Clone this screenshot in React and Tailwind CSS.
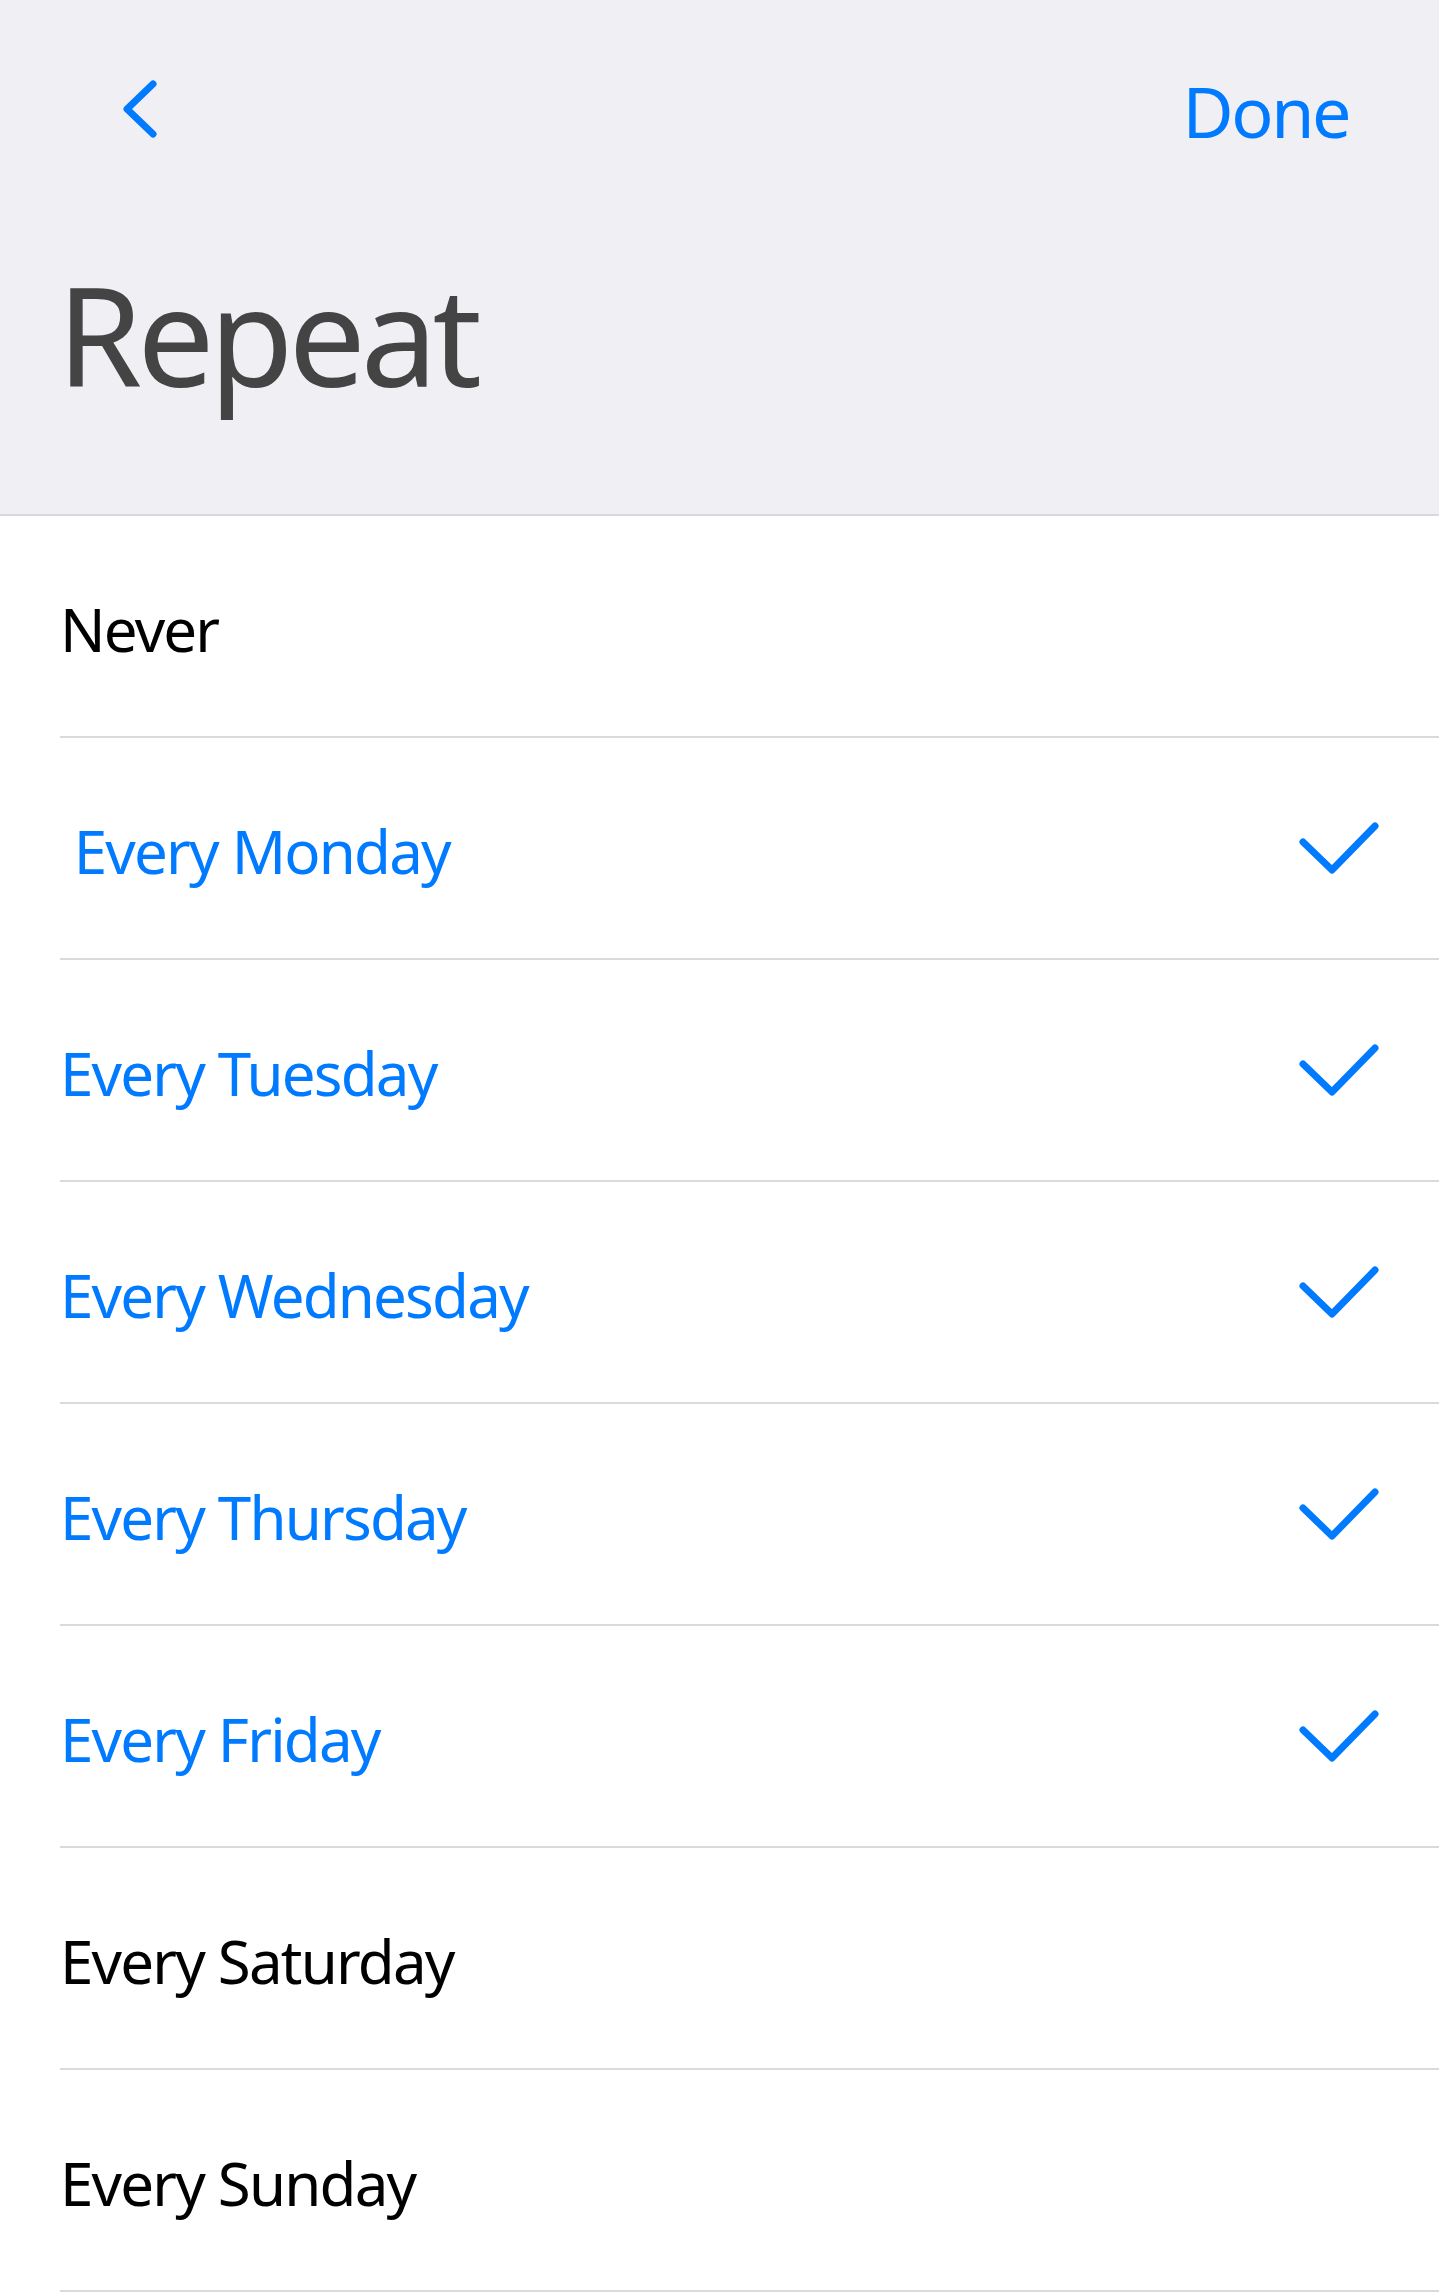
import React from 'react';

const BLUE = '#007aff';

const days = [
  { label: 'Never', on: false },
  { label: '\u00a0Every Monday', on: true },
  { label: 'Every Tuesday', on: true },
  { label: 'Every Wednesday', on: true },
  { label: 'Every Thursday', on: true },
  { label: 'Every Friday', on: true },
  { label: 'Every Saturday', on: false },
  { label: 'Every Sunday', on: false },
];

const Check = () => (
  <svg width="80" height="52" viewBox="0 0 80 52" fill="none">
    <polyline points="4,20 33,48 76,4" stroke={BLUE} strokeWidth="7" strokeLinecap="round" strokeLinejoin="round" />
  </svg>
);

const Chevron = () => (
  <svg width="40" height="64" viewBox="0 0 40 64" fill="none">
    <polyline points="35,7 9,32 35,57" stroke={BLUE} strokeWidth="7" strokeLinecap="round" strokeLinejoin="round" />
  </svg>
);

export default function App() {
  return (
    <div className="w-[1439px] min-h-[2292px] bg-white font-['Noto_Sans',sans-serif]">
      <header className="h-[516px] bg-[#efeff4] border-b-2 border-[#d8d8dc]">
        <div className="h-[218px] flex items-center justify-between pl-[118px] pr-[90px]">
          <Chevron />
          <span className="pt-[4px] text-[70px] leading-none tracking-[-0.035em] text-[#007aff]">Done</span>
        </div>
        <h1 className="mt-[48px] pl-[57px] text-[137px] leading-none tracking-[-0.037em] text-[#444444]">
          Repeat
        </h1>
      </header>

      <ul className="pl-[60px]">
        {days.map((d) => (
          <li
            key={d.label}
            className="h-[222px] flex items-center justify-between border-b-2 border-[#dadadc] pr-[60px]"
          >
            <span
              className={
                'pt-[5px] text-[60px] leading-none tracking-[-0.03em] ' +
                (d.on ? 'text-[#007aff]' : 'text-black')
              }
            >
              {d.label}
            </span>
            {d.on && <Check />}
          </li>
        ))}
      </ul>
    </div>
  );
}
